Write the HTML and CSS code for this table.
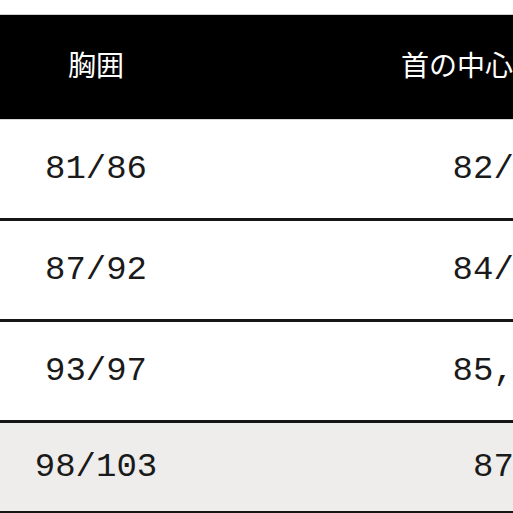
FILE: index.html
```html
<!DOCTYPE html>
<html lang="ja">
<head>
<meta charset="utf-8">
<title>サイズ表</title>
<link rel="stylesheet" href="styles.css">
</head>
<body>
<div class="table">
  <div class="row head">
    <div class="cell">胸囲</div>
    <div class="cell">首の中心からの袖丈</div>
  </div>
  <div class="row">
    <div class="cell num">81/86</div>
    <div class="cell num">82/83,5</div>
  </div>
  <div class="row">
    <div class="cell num">87/92</div>
    <div class="cell num">84/84,5</div>
  </div>
  <div class="row">
    <div class="cell num">93/97</div>
    <div class="cell num">85,5/86</div>
  </div>
  <div class="row alt">
    <div class="cell num">98/103</div>
    <div class="cell num">87/88</div>
  </div>
</div>
</body>
</html>
```
FILE: styles.css
```css
html, body {
  margin: 0;
  padding: 0;
  background: #ffffff;
  overflow: hidden;
  width: 513px;
  height: 513px;
}
.table {
  margin-top: 14px;
  width: 856px;
  border-top: 1px solid #cfcfcf;
}
.row {
  display: grid;
  grid-template-columns: 192px 664px;
  height: 98px;
  border-bottom: 3px solid #161616;
  background: #ffffff;
}
.row.head {
  height: 104px;
  background: #000000;
  border-bottom: 1px solid #d8d8d8;
}
.row.alt {
  height: 88px;
  background: #eeedeb;
}
.cell {
  display: flex;
  align-items: center;
  justify-content: center;
  white-space: nowrap;
}
.head .cell {
  color: #ffffff;
  font-family: "Noto Sans CJK JP", "Noto Sans", sans-serif;
  font-size: 28px;
  padding-bottom: 6px;
  box-sizing: border-box;
}
.head .cell + .cell {
  padding-left: 6px;
}
.num {
  color: #1a1a1a;
  font-family: "Liberation Mono", "DejaVu Sans Mono", monospace;
  font-size: 34px;
}
```
